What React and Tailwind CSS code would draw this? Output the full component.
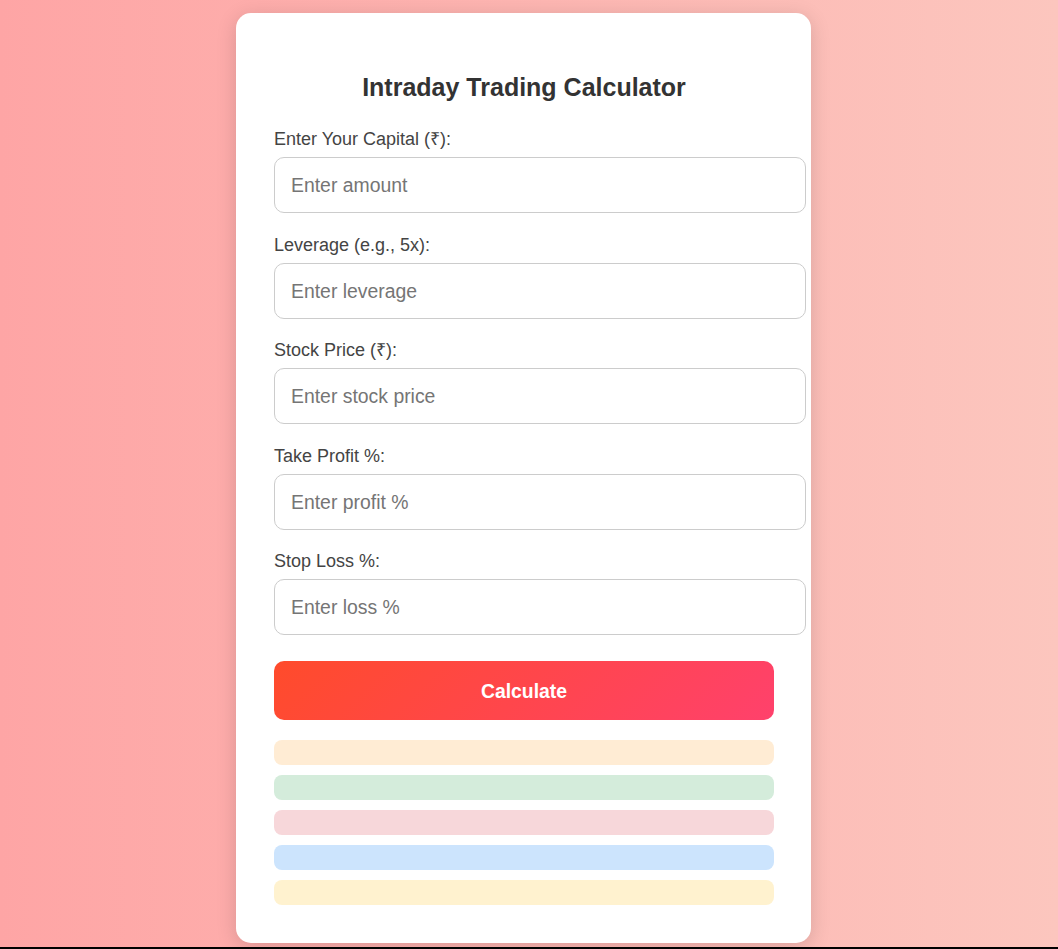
const fields = [
  { label: 'Enter Your Capital (₹):', placeholder: 'Enter amount' },
  { label: 'Leverage (e.g., 5x):', placeholder: 'Enter leverage' },
  { label: 'Stock Price (₹):', placeholder: 'Enter stock price' },
  { label: 'Take Profit %:', placeholder: 'Enter profit %' },
  { label: 'Stop Loss %:', placeholder: 'Enter loss %' },
]

const results = ['bg-[#ffecd4]', 'bg-[#d4ecdb]', 'bg-[#f7d7da]', 'bg-[#cce4fd]', 'bg-[#fff2cf]']

function App() {
  return (
    <div className="h-[949px] bg-black font-['Liberation_Sans',Arial,sans-serif]">
      <div className="h-[947px] overflow-hidden bg-[linear-gradient(to_right,#fea5a5,#fcc6be)] pl-[236px] pt-[13px]">
        <div className="w-[575px] rounded-[15px] bg-white pb-[38px] pl-[38px] pr-[37px] pt-[60px] shadow-[0_4px_20px_rgba(0,0,0,0.15)]">
          <h2 className="text-center text-[25px] font-bold leading-[28px] text-[#333]">
            Intraday Trading Calculator
          </h2>

          <div className="mt-[28px] flex flex-col gap-[21.5px]">
            {fields.map((field) => (
              <div key={field.label}>
                <label className="block text-[18px] leading-[20px] text-[#444]">
                  {field.label}
                </label>
                <input
                  type="number"
                  placeholder={field.placeholder}
                  className="mt-[8px] box-content block w-full rounded-[10px] border border-[#ccc] pl-[16px] pr-[14px] py-[16px] text-[19.4px] leading-[22px] text-[#333] placeholder:text-[#757575] outline-none"
                />
              </div>
            ))}
          </div>

          <button
            type="button"
            className="mt-[26px] block h-[59px] w-full rounded-[10px] bg-[linear-gradient(135deg,#ff4b2b,#ff416c)] text-[19.4px] font-bold leading-[22px] text-white"
          >
            Calculate
          </button>

          <div className="mt-[20px] flex flex-col gap-[10px]">
            {results.map((color) => (
              <div key={color} className={`h-[25px] rounded-[8px] ${color}`} />
            ))}
          </div>
        </div>
      </div>
    </div>
  )
}

export default App
